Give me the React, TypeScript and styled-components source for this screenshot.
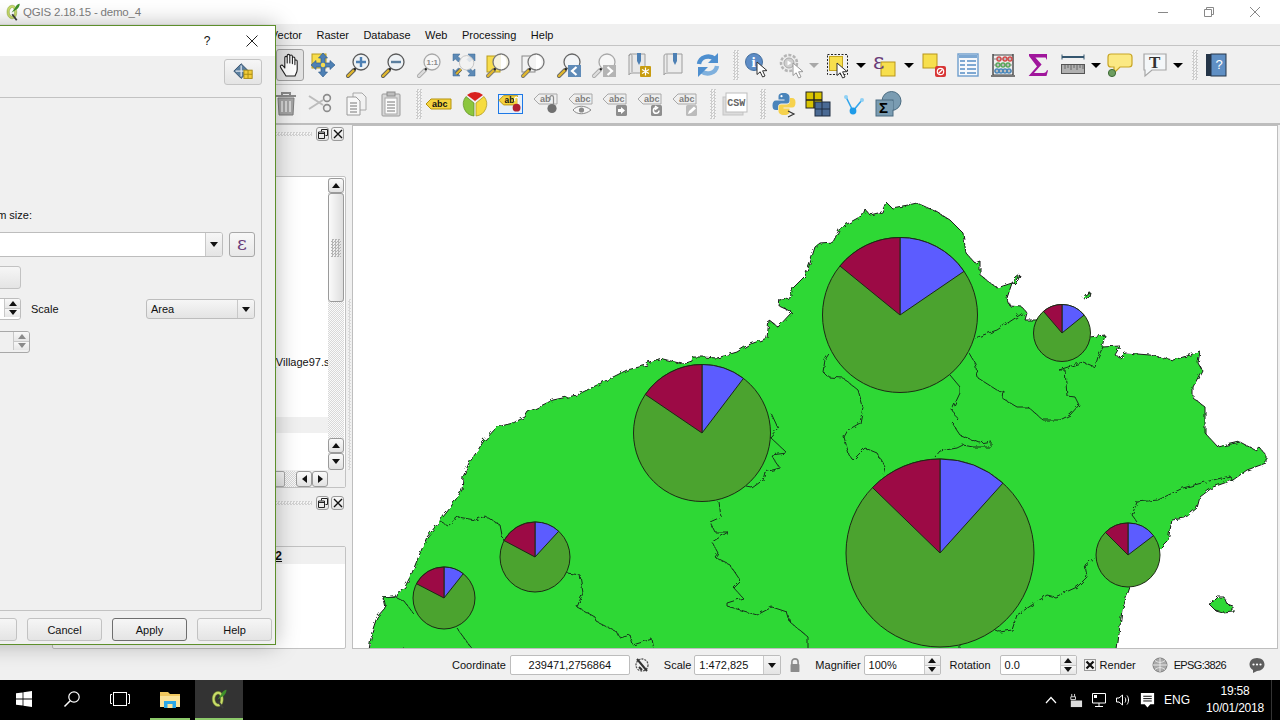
import React from "react";
import styled, { createGlobalStyle } from "styled-components";

const Global = createGlobalStyle`
  html, body { margin: 0; padding: 0; background: #f0f0f0; overflow: hidden; }
  body { font-family: "Liberation Sans", Arial, sans-serif; font-size: 11px; color: #111; }
`;

const Root = styled.div`
  position: relative;
  width: 1280px;
  height: 720px;
  overflow: hidden;
  display: flex;
  flex-direction: column;
  background: #f0f0f0;
`;

const TitleBar = styled.div`
  height: 24px;
  background: #fff;
  display: flex;
  align-items: center;
  padding: 0 2px 0 4px;
  color: #808080;
  font-size: 11.5px;
  letter-spacing: -0.2px;
`;
const TitleText = styled.span`
  margin-left: 1px;
  flex: 1;
`;
const WinBtn = styled.div`
  width: 46px;
  height: 24px;
  display: flex;
  align-items: center;
  justify-content: center;
`;
const MenuBar = styled.div`
  height: 21px;
  border-bottom: 1px solid #c4c4c4;
  display: flex;
  align-items: center;
  padding-left: 158.75px;
`;
const MenuItem = styled.span`
  padding: 0 7.25px;
  white-space: nowrap;
`;
const ToolRow = styled.div<{ $h: number; $bw: number; $bc: string }>`
  height: ${(p) => p.$h}px;
  border-bottom: ${(p) => p.$bw}px solid ${(p) => p.$bc};
  display: flex;
  align-items: center;
  flex: none;
`;
const Tool = styled.div<{ $w: number; $ml: number; $pressed?: boolean }>`
  width: ${(p) => p.$w}px;
  margin-left: ${(p) => p.$ml}px;
  height: ${(p) => (p.$pressed ? 32 : 28)}px;
  flex: none;
  display: flex;
  align-items: center;
  justify-content: center;
  position: relative;
  box-sizing: border-box;
  ${(p) => p.$pressed && "border: 1px solid #a0a0a0; border-radius: 3px; background: #e2e2e2;"}
`;
const Picked = styled.div`
  width: 25px;
  height: 20px;
  border: 1px solid #1c78e6;
  background: #e6eff9;
  display: flex;
  align-items: center;
  justify-content: center;
  box-sizing: border-box;
  overflow: visible;
`;
const Caret = styled.div<{ $dim?: boolean }>`
  width: 0;
  height: 0;
  border-left: 5px solid transparent;
  border-right: 5px solid transparent;
  border-top: 5px solid ${(p) => (p.$dim ? "#a8a8a8" : "#000")};
`;
const Grip = styled.div`
  width: 6px;
  height: 30px;
  background: repeating-conic-gradient(#cdcdcd 0 25%, #f6f6f6 0 50%) 0 0 / 3px 3px;
`;

const Work = styled.div`
  height: 525px;
  display: flex;
  flex: none;
`;
const Docks = styled.div`
  width: 347px;
  padding-top: 1px;
  box-sizing: border-box;
  display: flex;
  flex-direction: column;
  align-items: flex-end;
`;
const DockHead = styled.div<{ $mt: number }>`
  width: 72px;
  height: 15px;
  margin-top: ${(p) => p.$mt}px;
  margin-right: 1px;
  display: flex;
  align-items: center;
  gap: 2px;
`;
const DockGrip = styled.div`
  width: 38px;
  margin-right: 2px;
  height: 4px;
  background: repeating-conic-gradient(#d2d2d2 0 25%, #f4f4f4 0 50%) 0 0 / 3px 3px;
`;
const DockBtn = styled.div`
  width: 13px;
  height: 14px;
  box-sizing: border-box;
  border: 1px solid #9a9a9a;
  border-radius: 3px;
  background: linear-gradient(#f8f8f8, #e4e4e4);
  display: flex;
  align-items: center;
  justify-content: center;
`;
const Panel = styled.div<{ $mt: number; $h: number }>`
  width: 294px;
  height: ${(p) => p.$h}px;
  margin-top: ${(p) => p.$mt}px;
  margin-right: 1px;
  box-sizing: border-box;
  border: 1px solid #c2c2c2;
  border-radius: 2px;
  background: #fff;
  display: flex;
  flex-direction: column;
  flex: none;
`;
const PanelMain = styled.div`
  flex: 1;
  display: flex;
  min-height: 0;
`;
const List = styled.div`
  flex: 1;
  padding-top: 177px;
  overflow: hidden;
  white-space: nowrap;
`;
const ListRow = styled.div<{ $band?: boolean; $mt?: number }>`
  height: 16px;
  line-height: 16px;
  padding-left: 182.5px;
  margin-top: ${(p) => p.$mt ?? 0}px;
  ${(p) => p.$band && "background: #f0f0f0;"}
`;
const VScroll = styled.div`
  width: 16px;
  display: flex;
  flex-direction: column;
  margin: 1px 1px 0 0;
  background: repeating-conic-gradient(#d8d8d8 0 25%, #fafafa 0 50%) 0 0 / 2px 2px;
`;
const ScrollBtn = styled.div<{ $w?: number; $h?: number }>`
  width: ${(p) => p.$w ?? 16}px;
  height: ${(p) => p.$h ?? 15}px;
  flex: none;
  box-sizing: border-box;
  border: 1px solid #9a9a9a;
  border-radius: 3px;
  background: linear-gradient(#fafafa, #e2e2e2);
  display: flex;
  align-items: center;
  justify-content: center;
`;
const VThumb = styled.div`
  height: 109px;
  box-sizing: border-box;
  border: 1px solid #9a9a9a;
  border-radius: 3px;
  background: linear-gradient(90deg, #fafafa, #dedede);
  display: flex;
  align-items: center;
  justify-content: center;
  flex: none;
`;
const ThumbDots = styled.div`
  width: 10px;
  height: 18px;
  background: repeating-conic-gradient(#b4b4b4 0 25%, transparent 0 50%) 0 0 / 3px 3px;
`;
const VTrough = styled.div`
  flex: 1;
`;
const HScroll = styled.div`
  height: 17px;
  background: #f0f0f0;
  display: flex;
  align-items: center;
  flex: none;
`;
const HThumb = styled.div`
  width: 232px;
  height: 16px;
  box-sizing: border-box;
  border: 1px solid #a8a8a8;
  border-radius: 2px;
  background: linear-gradient(#f8f8f8, #e2e2e2);
  flex: none;
`;
const HTrough = styled.div`
  width: 11px;
  height: 16px;
  flex: none;
  background: repeating-conic-gradient(#d8d8d8 0 25%, #fafafa 0 50%) 0 0 / 2px 2px;
`;
const HeaderBand = styled.div`
  height: 17px;
  background: #f0f0f0;
  font-weight: bold;
  font-size: 12px;
  text-decoration: underline;
  line-height: 18px;
  padding-left: 191px;
  flex: none;
`;
const SplitCol = styled.div`
  width: 5px;
  display: flex;
  justify-content: center;
  padding-top: 174px;
  box-sizing: border-box;
`;
const SplitGrip = styled.div`
  width: 3px;
  height: 171px;
  background: repeating-conic-gradient(#d8d8d8 0 25%, #f4f4f4 0 50%) 0 0 / 3px 3px;
`;
const MapFrame = styled.div`
  width: 926px;
  height: 524px;
  box-sizing: border-box;
  border: 1px solid #bebebe;
  background: #fff;
  flex: none;
  overflow: hidden;
`;
const MapSvg = styled.svg`
  display: block;
  width: 924px;
  height: 522px;
`;

const StatusBar = styled.div`
  height: 30px;
  flex: none;
  display: flex;
  align-items: center;
`;
const Stat = styled.div<{ $ml: number; $tight?: boolean }>`
  margin-left: ${(p) => p.$ml}px;
  white-space: nowrap;
  display: flex;
  align-items: center;
  flex: none;
  ${(p) => p.$tight && "letter-spacing: -0.65px;"}
`;
const Field = styled.div<{ $w: number; $center?: boolean }>`
  width: ${(p) => p.$w}px;
  height: 20px;
  box-sizing: border-box;
  border: 1px solid #bdbdbd;
  border-radius: 2px;
  background: #fff;
  display: flex;
  align-items: center;
  justify-content: ${(p) => (p.$center ? "center" : "space-between")};
  padding-left: ${(p) => (p.$center ? 0 : 4)}px;
  overflow: hidden;
`;
const FieldDrop = styled.div`
  width: 16px;
  height: 18px;
  border-left: 1px solid #c8c8c8;
  background: linear-gradient(#f6f6f6, #e4e4e4);
  display: flex;
  align-items: center;
  justify-content: center;
  flex: none;
`;
const FieldSpin = styled.div`
  width: 15px;
  height: 18px;
  border-left: 1px solid #c8c8c8;
  display: flex;
  flex-direction: column;
  flex: none;
`;
const SpinCell = styled.div`
  flex: 1;
  background: linear-gradient(#f8f8f8, #e6e6e6);
  border-bottom: 1px solid #c8c8c8;
  display: flex;
  align-items: center;
  justify-content: center;
  &:last-child { border-bottom: 0; }
`;
const Tri = styled.div<{ $dir: "u" | "d" | "l" | "r"; $dim?: boolean }>`
  width: 0;
  height: 0;
  ${(p) => {
    const c = p.$dim ? "#8a8a8a" : "#111";
    if (p.$dir === "u") return `border-left:4px solid transparent;border-right:4px solid transparent;border-bottom:5px solid ${c};`;
    if (p.$dir === "d") return `border-left:4px solid transparent;border-right:4px solid transparent;border-top:5px solid ${c};`;
    if (p.$dir === "l") return `border-top:4px solid transparent;border-bottom:4px solid transparent;border-right:5px solid ${c};`;
    return `border-top:4px solid transparent;border-bottom:4px solid transparent;border-left:5px solid ${c};`;
  }}
`;
const RenderCheck = styled.div`
  width: 12px;
  height: 12px;
  box-sizing: border-box;
  border: 1px solid #999;
  background: #f4f4f4;
  display: flex;
  align-items: center;
  justify-content: center;
`;

const Taskbar = styled.div`
  height: 40px;
  flex: none;
  background: #000;
  display: flex;
  align-items: stretch;
  color: #fff;
`;
const TaskCell = styled.div<{ $w: number; $ml?: number; $active?: boolean; $open?: boolean }>`
  width: ${(p) => p.$w}px;
  margin-left: ${(p) => p.$ml ?? 0}px;
  flex: none;
  box-sizing: border-box;
  display: flex;
  align-items: center;
  justify-content: center;
  background: ${(p) => (p.$active ? "#333" : "transparent")};
  border-bottom: ${(p) => (p.$open ? "2px solid #8cc96a" : "2px solid transparent")};
`;
const TrayCell = styled.div<{ $w: number }>`
  width: ${(p) => p.$w}px;
  flex: none;
  display: flex;
  align-items: center;
  justify-content: center;
  font-size: 12px;
`;
const TraySpring = styled.div`
  flex: 1;
`;
const Clock = styled.div`
  width: 74px;
  flex: none;
  margin: 0 -3px 0 3px;
  display: flex;
  flex-direction: column;
  align-items: center;
  justify-content: center;
  font-size: 12px;
  line-height: 17px;
  letter-spacing: -0.2px;
`;
const TrayEnd = styled.div`
  width: 8px;
  flex: none;
  border-left: 1px solid #333;
  margin-left: 2px;
`;

const Dialog = styled.div`
  position: absolute;
  left: -200px;
  top: 25px;
  width: 476px;
  height: 620px;
  box-sizing: border-box;
  border: 1px solid #5d8f2b;
  background: #f0f0f0;
  box-shadow: 0 0 22px rgba(0, 0, 0, 0.28);
  display: flex;
  flex-direction: column;
`;
const DialogTitle = styled.div`
  height: 30px;
  background: #fff;
  flex: none;
  display: flex;
  align-items: center;
  justify-content: flex-end;
`;
const TitleQ = styled.div`
  width: 46px;
  font-size: 12px;
  text-align: center;
  color: #111;
  margin-right: -1px;
`;
const TitleX = styled.div`
  width: 46px;
  display: flex;
  justify-content: center;
`;
const DialogBody = styled.div`
  flex: 1;
  display: flex;
  flex-direction: column;
  padding: 3px 13px 0 0;
  min-height: 0;
`;
const DialogTop = styled.div`
  height: 26px;
  display: flex;
  justify-content: flex-end;
  flex: none;
`;
const IconBtn = styled.div`
  width: 38px;
  height: 26px;
  box-sizing: border-box;
  border: 1px solid #c4c4c4;
  border-radius: 3px;
  background: linear-gradient(#f6f6f6, #e4e4e4);
  display: flex;
  align-items: center;
  justify-content: center;
`;
const Frame = styled.div`
  height: 514px;
  margin-top: 12px;
  flex: none;
  box-sizing: border-box;
  border: 1px solid #c2c2c2;
  border-radius: 2px;
  display: flex;
  flex-direction: column;
  padding: 110px 6px 0 0;
`;
const FormRow = styled.div<{ $mt: number; $mr: number; $h: number }>`
  height: ${(p) => p.$h}px;
  margin-top: ${(p) => p.$mt}px;
  margin-right: ${(p) => p.$mr}px;
  display: flex;
  justify-content: flex-end;
  align-items: center;
  flex: none;
`;
const Combo = styled.div<{ $w: number; $h: number }>`
  width: ${(p) => p.$w}px;
  height: ${(p) => p.$h}px;
  box-sizing: border-box;
  border: 1px solid #bdbdbd;
  border-radius: 3px;
  background: #fff;
  display: flex;
  justify-content: flex-end;
  overflow: hidden;
  flex: none;
`;
const ComboDrop = styled.div`
  width: 16px;
  border-left: 1px solid #c8c8c8;
  background: linear-gradient(#f6f6f6, #e4e4e4);
  display: flex;
  align-items: center;
  justify-content: center;
`;
const Epsilon = styled.div`
  width: 26px;
  height: 25px;
  margin-left: 6px;
  box-sizing: border-box;
  border: 1px solid #a8a8a8;
  border-radius: 3px;
  background: linear-gradient(#f8f8f8, #e8e8e8);
  color: #6a3d78;
  font-family: "DejaVu Serif", serif;
  font-size: 19px;
  line-height: 20px;
  text-align: center;
`;
const PlainBtn = styled.div<{ $w: number; $h: number; $strong?: boolean }>`
  width: ${(p) => p.$w}px;
  height: ${(p) => p.$h}px;
  box-sizing: border-box;
  border: 1px solid ${(p) => (p.$strong ? "#6e6e6e" : "#c2c2c2")};
  border-radius: 3px;
  background: linear-gradient(#f6f6f6, #e4e4e4);
  display: flex;
  align-items: center;
  justify-content: center;
  flex: none;
`;
const SpinBox = styled.div<{ $w: number; $dim?: boolean }>`
  width: ${(p) => p.$w}px;
  height: 22px;
  box-sizing: border-box;
  border: 1px solid ${(p) => (p.$dim ? "#a8a8a8" : "#bdbdbd")};
  border-radius: 3px;
  background: ${(p) => (p.$dim ? "#f0f0f0" : "#fff")};
  display: flex;
  justify-content: flex-end;
  overflow: hidden;
  flex: none;
`;
const ScaleLabel = styled.div`
  width: 115px;
  padding-left: 10px;
  flex: none;
`;
const SelectBox = styled.div`
  width: 109px;
  height: 20px;
  box-sizing: border-box;
  border: 1px solid #bdbdbd;
  border-radius: 3px;
  background: linear-gradient(#f6f6f6, #e4e4e4);
  display: flex;
  align-items: center;
  justify-content: space-between;
  padding-left: 4px;
  overflow: hidden;
  flex: none;
`;
const DialogFoot = styled.div`
  height: 23px;
  margin-top: 7px;
  margin-right: -10px;
  display: flex;
  justify-content: flex-end;
  gap: 10px;
  flex: none;
`;

/* ---------- icons ---------- */
const Ico = styled.svg<{ $s?: number }>`
  width: ${(p) => p.$s ?? 28}px;
  height: ${(p) => p.$s ?? 28}px;
  display: block;
  overflow: visible;
  flex: none;
`;
const SvgLabel = styled.text<{ $size: number; $fill: string; $bold?: boolean; $family?: string }>`
  font-family: ${(p) => p.$family ?? '"Liberation Sans", sans-serif'};
  font-size: ${(p) => p.$size}px;
  font-weight: ${(p) => (p.$bold ? "bold" : "normal")};
  fill: ${(p) => p.$fill};
`;

const Mag = ({ c = "#5a5a5a", fill = "#eef2f5", h = "#dfb62c", children }: { c?: string; fill?: string; h?: string; children?: React.ReactNode }) => (
  <>
    <line x1="4" y1="25" x2="10" y2="19" stroke={c} strokeWidth="4" strokeLinecap="round" />
    <line x1="4" y1="25" x2="10" y2="19" stroke={h} strokeWidth="2.4" strokeLinecap="round" />
    <line x1="10" y1="19" x2="12" y2="17" stroke="#222" strokeWidth="2" />
    <circle cx="17" cy="11" r="8" fill={fill} stroke={c} strokeWidth="1.3" />
    {children}
  </>
);
const Cursor = ({ x, y, c = "#333" }: { x: number; y: number; c?: string }) => (
  <path transform={`translate(${x} ${y})`} d="M0 0V12.5L3.2 9.8L5.6 15L8 14L5.6 8.8L10 8.6Z" fill="#fff" stroke={c} strokeWidth="1" strokeLinejoin="round" />
);
const Tag = ({ t, x = 1, y = 8, w = 25, fill = "#f4d33f", st = "#b5930d", tc = "#111", size = 9 }: { t: string; x?: number; y?: number; w?: number; fill?: string; st?: string; tc?: string; size?: number }) => (
  <>
    <path d={`M${x} ${y + 5}L${x + 5} ${y}H${x + w}V${y + 10}H${x + 5}Z`} fill={fill} stroke={st} />
    <SvgLabel x={x + 6} y={y + 8.3} $size={size} $fill={tc} $bold>{t}</SvgLabel>
  </>
);
const GrayTag = ({ t }: { t: string }) => <Tag t={t} x={2} y={4} w={23} fill="#efefef" st="#a8a8a8" tc="#7d7d7d" size={9} />;
const Badge = ({ kind }: { kind: string }) => (
  <>
    <rect x="15" y="15" width="11" height="11" rx="1.5" fill="#8e8e8e" />
    {kind === "arrow" && <path d="M17 19H20V17L24 20.5L20 24V22H17Z" fill="#fff" />}
    {kind === "spin" && <path d="M23 20.5A2.8 2.8 0 1 1 20 17.7M19 16L21.5 17.8L19 19.6" fill="none" stroke="#fff" strokeWidth="1.5" />}
  </>
);

const ICONS: Record<string, React.ReactNode> = {
  hand: (
    <path d="M10 25L4.6 16.4C3.6 14.6 6 13.2 7.2 15L8.8 17V6.6C8.8 5 11.2 5 11.2 6.6V12V4.6C11.2 3 13.8 3 13.8 4.6V12V5.2C13.8 3.6 16.4 3.6 16.4 5.4V12.6V7.2C16.4 5.6 18.9 5.6 18.9 7.4V13.6V10C18.9 8.6 21.2 8.8 21.2 10.4V18.4C21.2 21.2 19.6 23 19 25Z" fill="#fff" stroke="#222" strokeWidth="1.1" strokeLinejoin="round" />
  ),
  panSel: (
    <>
      <rect x="3" y="3" width="14" height="14" fill="#f7dd4d" stroke="#b99c1c" />
      <path d="M14 2L18.5 7H16V12H21V9.5L26 14L21 18.5V16H16V21H18.5L14 26L9.5 21H12V16H7V18.5L2 14L7 9.5V12H12V7H9.5Z" fill="#4d80b4" stroke="#33608f" strokeWidth=".7" />
      <circle cx="14" cy="14" r="2.2" fill="#f7dd4d" />
    </>
  ),
  zoomIn: (
    <Mag>
      <path d="M17 6V16M12 11H22" stroke="#4d80b4" strokeWidth="2.4" />
    </Mag>
  ),
  zoomOut: (
    <Mag>
      <path d="M12 11H22" stroke="#5b7f9f" strokeWidth="2.4" />
    </Mag>
  ),
  zoom11: (
    <Mag c="#a8a8a8" h="#dcdcdc" fill="#f6f6f6">
      <SvgLabel x="11.5" y="14" $size={8} $fill="#8a8a8a" $bold>1:1</SvgLabel>
    </Mag>
  ),
  zoomFull: (
    <>
      <path d="M3 3H10L8 5.4L11 8.4L8.4 11L5.4 8L3 10ZM25 3V10L22.6 8L19.6 11L17 8.4L20 5.4L18 3ZM3 25V18L5.4 20L8.4 17L11 19.6L8 22.6L10 25ZM25 25H18L20 22.6L17 19.6L19.6 17L22.6 20L25 18Z" fill="#5d8ab6" stroke="#3a6690" strokeWidth=".5" />
      <g transform="translate(3 3) scale(.8)">
        <line x1="4" y1="25" x2="10" y2="19" stroke="#555" strokeWidth="4" />
        <line x1="4" y1="25" x2="10" y2="19" stroke="#dfb62c" strokeWidth="2.4" />
        <circle cx="17" cy="11" r="9" fill="#f2f2f2" fillOpacity=".85" stroke="#bdbdbd" />
      </g>
    </>
  ),
  zoomLayer: (
    <>
      <rect x="3" y="5" width="13" height="16" fill="#f7dd4d" stroke="#b99c1c" />
      <Mag fill="#f5f2e0" c="#777" />
      <path d="M17 3.4A8 8 0 0 1 17 18.6Z" fill="#fff" />
    </>
  ),
  zoomSel: (
    <>
      <rect x="3" y="5" width="13" height="16" fill="#f2f2f2" stroke="#888" />
      <Mag fill="#f3f3f3" c="#777" />
      <path d="M17 3.4A8 8 0 0 1 17 18.6Z" fill="#fff" />
    </>
  ),
  zoomLast: (
    <>
      <Mag fill="#f3f5f7" c="#666" />
      <rect x="13" y="14" width="13" height="12" fill="#5f8bb8" />
      <path d="M21.5 16L17 20L21.5 24" fill="none" stroke="#fff" strokeWidth="2.2" />
    </>
  ),
  zoomNext: (
    <>
      <Mag fill="#f7f7f7" c="#a8a8a8" h="#ddd" />
      <rect x="13" y="14" width="13" height="12" fill="#b4b4b4" />
      <path d="M17.5 16L22 20L17.5 24" fill="none" stroke="#fff" strokeWidth="2.2" />
    </>
  ),
  newBook: (
    <>
      <path d="M4 5C4 3 6 3 7 3H20V22H8C5 22 4 23 4 24Z" fill="#e8e8e8" stroke="#9c9c9c" />
      <path d="M4 5C4 2 7 3 7 5V21" fill="none" stroke="#9c9c9c" />
      <path d="M12 2H16V10L14 14L12 10Z" fill="#4d80b4" />
      <rect x="15" y="15" width="11" height="11" rx="1" fill="#c89c10" />
      <path d="M20.5 16.5V24.5M17 18.5L24 22.5M24 18.5L17 22.5" stroke="#fff" strokeWidth="1.2" />
    </>
  ),
  book: (
    <>
      <path d="M5 5C5 3 7 3 8 3H23V22H9C6 22 5 23 5 24Z" fill="#ececec" stroke="#9c9c9c" />
      <path d="M8 3V21" stroke="#a8a8a8" />
      <path d="M14 2H18V10L16 14L14 10Z" fill="#4d80b4" />
    </>
  ),
  refresh: (
    <>
      <path d="M5 13C6 6 15 3 21 8" fill="none" stroke="#4e8fcf" strokeWidth="4.4" />
      <path d="M24 2V12H14Z" fill="#4e8fcf" />
      <path d="M23 15C22 22 13 25 7 20" fill="none" stroke="#7fb0dd" strokeWidth="4.4" />
      <path d="M4 26V16H14Z" fill="#4e8fcf" />
    </>
  ),
  identify: (
    <>
      <circle cx="11" cy="11" r="8.5" fill="#5d8cc6" stroke="#46709f" />
      <SvgLabel x="8.5" y="16" $size={15} $fill="#fff" $bold $family={'"Liberation Serif", serif'}>i</SvgLabel>
      <Cursor x={14} y={11} />
    </>
  ),
  action: (
    <>
      <circle cx="11" cy="12" r="8" fill="#ededed" stroke="#b4b4b4" strokeWidth="2.5" strokeDasharray="3 1.6" />
      <circle cx="11" cy="12" r="5" fill="#cfcfcf" stroke="#aaa" />
      <path d="M9.5 9.5V14.5L13.5 12Z" fill="#fff" />
      <Cursor x={15} y={12} c="#999" />
    </>
  ),
  select: (
    <>
      <rect x="2.5" y="3.5" width="20" height="20" fill="none" stroke="#222" strokeDasharray="2 1.5" />
      <rect x="4.5" y="5.5" width="13" height="14" fill="#f7df4d" stroke="#c4a51f" />
      <Cursor x={12} y={12} />
    </>
  ),
  exprSel: (
    <>
      <rect x="10" y="11" width="14" height="14" fill="#f7df4d" stroke="#b8951a" />
      <SvgLabel x="2" y="18" $size={22} $fill="#6a3d78" $family={'"DejaVu Serif", serif'}>ε</SvgLabel>
    </>
  ),
  deselect: (
    <>
      <rect x="3" y="3" width="14" height="14" fill="#f7df4d" stroke="#b8951a" />
      <rect x="15" y="15" width="11" height="11" rx="2" fill="#d83636" />
      <circle cx="20.5" cy="20.5" r="3.2" fill="none" stroke="#fff" strokeWidth="1.2" />
      <path d="M18.5 22.5L22.5 18.5" stroke="#fff" strokeWidth="1.2" />
    </>
  ),
  table: (
    <>
      <rect x="4" y="3" width="20" height="22" fill="#f6f8fb" stroke="#6e9dcc" strokeWidth="1.4" />
      <rect x="5" y="4" width="18" height="3" fill="#7ea8d2" />
      <path d="M6 10H11M13 10H22M6 14H11M13 14H22M6 18H11M13 18H22M6 22H11M13 22H22" stroke="#7ea8d2" strokeWidth="1.8" />
    </>
  ),
  abacus: (
    <>
      <path d="M4 3V25M24 3V25" stroke="#444" strokeWidth="1.4" />
      <path d="M4 4H24M4 24H24" stroke="#444" />
      <rect x="2" y="24" width="24" height="2" fill="#777" />
      <path d="M4 8H24M4 14H24M4 20H24" stroke="#888" />
      {[10, 16, 21].map((x) => <circle key={"a" + x} cx={x} cy="8" r="2" fill="none" stroke="#d14a4a" strokeWidth="1.4" />)}
      {[9, 14, 19].map((x) => <circle key={"b" + x} cx={x} cy="14" r="2" fill="none" stroke="#5aa55a" strokeWidth="1.4" />)}
      {[8, 12, 16, 20].map((x) => <circle key={"c" + x} cx={x} cy="20" r="2" fill="none" stroke="#4a86b8" strokeWidth="1.4" />)}
    </>
  ),
  sigma: <path d="M5 3H23V9L21.6 6.4H11.4L17.6 13.4L10 22H19.5C21.4 22 22.4 21 23 19L24 19.4L22.5 25H4.6L13 15.4L5 5Z" fill="#a0169c" />,
  measure: (
    <>
      <path d="M3 6H25" stroke="#35566f" strokeWidth="2" />
      <path d="M3 3.5V8.5M25 3.5V8.5" stroke="#35566f" />
      <rect x="2.5" y="13.5" width="23" height="9" fill="#b0b0b0" stroke="#555" />
      <path d="M6 14V18M9 14V17M12 14V19M15 14V17M18 14V19M21 14V17M24 14V18" stroke="#555" strokeWidth=".8" />
    </>
  ),
  tip: (
    <>
      <path d="M5 3H23C25 3 26 4 26 6V13C26 15 25 16 23 16H14L8 22V16H5C3 16 2 15 2 13V6C2 4 3 3 5 3Z" fill="#fbe983" stroke="#c8a526" strokeWidth="1.2" />
      <circle cx="6" cy="22" r="3.6" fill="#6d9d5f" stroke="#3f6a38" />
    </>
  ),
  text: (
    <>
      <path d="M3 3H25V19H11L4 25V19H3Z" fill="#f4f7f9" stroke="#a6a6a6" strokeWidth="1.2" />
      <SvgLabel x="8" y="17" $size={17} $fill="#333" $bold $family={'"Liberation Serif", serif'}>T</SvgLabel>
    </>
  ),
  help: (
    <>
      <rect x="4" y="3" width="5" height="22" fill="#243548" />
      <rect x="9" y="3" width="15" height="22" fill="#5f8fc4" stroke="#243548" />
      <SvgLabel x="13.5" y="18" $size={13} $fill="#fff">?</SvgLabel>
    </>
  ),
  trash: (
    <>
      <path d="M10 5V3H18V5M4 6H24" stroke="#8a8a8a" strokeWidth="2" fill="none" />
      <path d="M6 8H22L21 25H7Z" fill="#a4a4a4" stroke="#7c7c7c" />
      <path d="M10 11V22M14 11V22M18 11V22" stroke="#e8e8e8" strokeWidth="1.4" />
    </>
  ),
  scissors: (
    <>
      <path d="M3 6L17 15M3 19L17 10" stroke="#bcbcbc" strokeWidth="2" />
      <circle cx="21" cy="8" r="3.4" fill="none" stroke="#8c8c8c" strokeWidth="1.6" />
      <circle cx="21" cy="18" r="3.4" fill="none" stroke="#8c8c8c" strokeWidth="1.6" />
    </>
  ),
  copy: (
    <>
      <path d="M11 3H20L24 7V20H11Z" fill="#f2f2f2" stroke="#a8a8a8" />
      <path d="M5 7H14L18 11V25H5Z" fill="#f8f8f8" stroke="#9a9a9a" />
      <path d="M8 13H15M8 16H15M8 19H15M8 22H15" stroke="#777" />
    </>
  ),
  paste: (
    <>
      <rect x="5" y="4" width="18" height="22" rx="1" fill="#d8d8d8" stroke="#9a9a9a" />
      <rect x="8" y="8" width="12" height="16" fill="#fbfbfb" stroke="#a8a8a8" />
      <rect x="10" y="2" width="8" height="4" fill="#bdbdbd" stroke="#8c8c8c" />
      <path d="M10 12H18M10 15H18M10 18H18M10 21H18" stroke="#777" />
    </>
  ),
  abc: <Tag t="abc" x={1} y={9} w={25} />,
  pieDiag: (
    <>
      <path d="M6 5A12 12 0 0 1 22 5L14 11Z" fill="#d8201e" />
      <path d="M23 6.5A12 12 0 0 1 15 26V13Z" fill="#f6dc3f" stroke="#a8921c" strokeWidth=".7" />
      <path d="M5 6.5A12 12 0 0 0 13 26V13Z" fill="#8cc63e" stroke="#5c8c20" strokeWidth=".7" />
    </>
  ),
  abLock: (
    <>
      <Tag t="ab" x={1} y={5} w={20} />
      <path d="M18 11V8.5C18 6 21.5 6 21.5 8.5V14" fill="none" stroke="#fff" strokeWidth="1.2" />
      <circle cx="20" cy="18" r="4.2" fill="#b02030" />
    </>
  ),
  abGray: (
    <>
      <GrayTag t="ab" />
      <path d="M18 10V7.5C18 5 21.5 5 21.5 7.5V14" fill="none" stroke="#8a8a8a" strokeWidth="1.2" />
      <circle cx="20" cy="18.5" r="4.6" fill="#707070" />
    </>
  ),
  abcEye: (
    <>
      <GrayTag t="abc" />
      <path d="M6 20C10 15 18 15 24 20C18 25 10 25 6 20Z" fill="#f6f6f6" stroke="#8a8a8a" />
      <circle cx="14.5" cy="20" r="2.6" fill="#8a8a8a" />
    </>
  ),
  abcMove: (
    <>
      <GrayTag t="abc" />
      <Badge kind="arrow" />
    </>
  ),
  abcSpin: (
    <>
      <GrayTag t="abc" />
      <Badge kind="spin" />
    </>
  ),
  abcPen: (
    <>
      <GrayTag t="abc" />
      <rect x="15" y="15" width="11" height="11" rx="1.5" fill="#bcbcbc" />
      <path d="M17 24L18 21L23 16.5L25 18.5L20 23Z" fill="#fff" />
    </>
  ),
  csw: (
    <>
      <rect x="2" y="7" width="20" height="18" fill="#dcdcdc" stroke="#c4c4c4" />
      <rect x="5" y="3" width="21" height="19" fill="#fff" stroke="#bdbdbd" />
      <SvgLabel x="6.3" y="16" $size={10} $fill="#666" $bold $family={'"Liberation Mono", monospace'}>CSW</SvgLabel>
    </>
  ),
  python: (
    <>
      <path d="M14 3C9 3 8.5 5 8.5 7V9.5H14.5V10.5H6C3.5 10.5 2.5 12.5 2.5 15.5C2.5 18.5 3.5 20 6 20H8V17C8 15 9.5 13.5 11.5 13.5H17C18.5 13.5 19.5 12.5 19.5 11V7C19.5 5 17.5 3 14 3Z" fill="#4a84ba" />
      <circle cx="11.5" cy="6.2" r="1.1" fill="#fff" />
      <path d="M14 25C19 25 19.5 23 19.5 21V18.5H13.5V17.5H22C24.5 17.5 25.5 15.5 25.5 12.5C25.5 9.5 24.5 8 22 8H20V11C20 13 18.5 14.5 16.5 14.5H11C9.5 14.5 8.5 15.5 8.5 17V21C8.5 23 10.5 25 14 25Z" fill="#f6d24e" />
      <path d="M18 21L24 24L18 27" fill="none" stroke="#333" strokeWidth="1.2" />
    </>
  ),
  grass: (
    <>
      <rect x="2" y="2" width="16" height="16" fill="#d9c400" stroke="#222" />
      <path d="M10 2V18M2 10H18" stroke="#222" strokeWidth="1.4" />
      <rect x="11" y="12" width="15" height="14" fill="#4a6a94" stroke="#1f2d40" />
      <path d="M18 12V26M11 19H26" stroke="#1f2d40" />
    </>
  ),
  hub: (
    <>
      <path d="M14 21L7 7M14 21L23 10" stroke="#33a6ec" strokeWidth="1.6" />
      <circle cx="14" cy="21" r="3.4" fill="#1e9be8" />
      <circle cx="7" cy="7" r="2" fill="#8fd0f4" />
      <circle cx="23" cy="10" r="2" fill="#8fd0f4" />
    </>
  ),
  sigmaCloud: (
    <>
      <circle cx="17.5" cy="11" r="9.5" fill="#7a9cb2" stroke="#4a6b80" />
      <rect x="2" y="10" width="17" height="16" fill="#7a9cb2" stroke="#4a6b80" />
      <path d="M12 11.5A9.5 9.5 0 0 0 19 20V11Z" fill="#7a9cb2" />
      <SvgLabel x="5" y="23" $size={15} $fill="#000" $bold>Σ</SvgLabel>
    </>
  ),
};

type Item = { at: number; i?: string; k?: "caret" | "dimcaret" | "grip" | "pressed" | "picked" };
const ROW1: Item[] = [
  { at: 290, i: "hand", k: "pressed" }, { at: 322.5, i: "panSel" }, { at: 358, i: "zoomIn" }, { at: 393, i: "zoomOut" },
  { at: 428.5, i: "zoom11" }, { at: 464, i: "zoomFull" }, { at: 498, i: "zoomLayer" }, { at: 533, i: "zoomSel" },
  { at: 568.5, i: "zoomLast" }, { at: 603.5, i: "zoomNext" }, { at: 639, i: "newBook" }, { at: 673, i: "book" },
  { at: 708, i: "refresh" }, { at: 736, k: "grip" }, { at: 757, i: "identify" }, { at: 792, i: "action" },
  { at: 814, k: "dimcaret" }, { at: 839, i: "select" }, { at: 861, k: "caret" }, { at: 885, i: "exprSel" },
  { at: 909, k: "caret" }, { at: 934, i: "deselect" }, { at: 968, i: "table" }, { at: 1003, i: "abacus" },
  { at: 1038, i: "sigma" }, { at: 1073, i: "measure" }, { at: 1096, k: "caret" }, { at: 1120, i: "tip" },
  { at: 1155, i: "text" }, { at: 1178, k: "caret" }, { at: 1195, k: "grip" }, { at: 1216, i: "help" },
];
const ROW2: Item[] = [
  { at: 286, i: "trash" }, { at: 320, i: "scissors" }, { at: 356, i: "copy" }, { at: 391, i: "paste" },
  { at: 419, k: "grip" }, { at: 439, i: "abc" }, { at: 475, i: "pieDiag" }, { at: 510.5, i: "abLock", k: "picked" },
  { at: 546, i: "abGray" }, { at: 581, i: "abcEye" }, { at: 615, i: "abcMove" }, { at: 650, i: "abcSpin" },
  { at: 685, i: "abcPen" }, { at: 713, k: "grip" }, { at: 735, i: "csw" }, { at: 762.5, k: "grip" },
  { at: 784, i: "python" }, { at: 818, i: "grass" }, { at: 853, i: "hub" }, { at: 888, i: "sigmaCloud" },
];

function Tools({ items }: { items: Item[] }) {
  let cursor = 0;
  return (
    <>
      {items.map((it, idx) => {
        const w = it.k === "caret" || it.k === "dimcaret" ? 10 : it.k === "grip" ? 6 : 28;
        const ml = it.at - w / 2 - cursor;
        cursor = it.at + w / 2;
        return (
          <Tool key={idx} $w={w} $ml={ml} $pressed={it.k === "pressed"}>
            {it.k === "caret" && <Caret />}
            {it.k === "dimcaret" && <Caret $dim />}
            {it.k === "grip" && <Grip />}
            {it.k === "picked" && (
              <Picked>
                <Ico viewBox="0 0 28 28" $s={26}>{ICONS[it.i!]}</Ico>
              </Picked>
            )}
            {it.i && it.k !== "picked" && <Ico viewBox="0 0 28 28">{ICONS[it.i]}</Ico>}
          </Tool>
        );
      })}
    </>
  );
}

/* ---------- map ---------- */
const COAST =
  "M369 650L372 632L377 617L385 608L383 598L395 597L397 593L405 587L412 573L418 558L427 537L439 522L450 508L462 490L463 477L469 463L478 450L483 442L497 427L513 423L525 417L528 412L553 400L577 395L593 387L607 380L627 370L647 365L648 360L650 363L663 359L683 364L692 361L693 357L703 357L717 358L737 352L748 345L767 338L769 320L778 327L792 312L779 306L780 299L790 298L793 288L805 276L810 263L815 247L820 243L833 242L840 228L863 215L865 209L870 215L882 212L886 202L892 208L908 205L917 203L937 212L950 220L963 233L966 253L975 263L980 261L980 275L997 288L1012 283L1007 298L1010 306L1022 307L1027 313L1025 320L1037 320L1060 312L1090 337L1105 335L1102 347L1120 346L1115 355L1120 358L1125 353L1150 355L1173 360L1190 355L1200 351L1198 363L1202 370L1193 387L1193 398L1205 407L1205 433L1218 447L1240 442L1255 450L1259 447L1266 455L1266 463L1247 470L1233 480L1213 487L1200 497L1197 508L1185 518L1172 520L1168 540L1160 548L1130 587L1122 610L1117 650Z";
const BORDERS = [
  "M830 352L825 360L823 372L828 377L843 378L858 390L863 407L860 423L848 430L844 437L849 455L853 460L865 448L877 453L885 467L883 475",
  "M950 375L960 387L960 393L952 410L957 418L952 423L960 435L980 443L991 441L991 447L973 447L963 445L957 448L940 451L935 457",
  "M969 353L975 363L978 378L1000 392L1003 390L1002 398L1017 407L1028 407L1043 420L1060 420L1070 415L1079 405L1075 397L1067 396L1065 370L1059 370L1083 362L1095 367L1098 357L1103 347",
  "M975 338L997 330L1023 313",
  "M995 630L1000 632L1012 630L1017 615L1047 595L1055 597L1077 587L1087 577L1085 565L1095 557",
  "M1138 523L1132 515L1137 502L1158 500L1183 488L1213 480L1230 476L1233 482",
  "M771 413L778 428L770 437L787 453L771 455L780 468L765 472L763 480L752 488L747 487",
  "M719 502L721 517L710 522L715 532L728 532L712 542L718 553L715 557L720 560L730 565L740 580L733 587L743 598L727 603L727 606L757 615L772 607L787 612L790 622L808 637L808 650",
  "M567 573L580 575L583 593L577 607L595 617L597 622L617 632L620 638L630 635L633 645L652 639L654 650",
  "M441 522L448 526L458 517L475 520L485 516L500 525L503 540",
  "M383 598L395 597L405 602L413 613",
  "M456 627L473 650",
  "M960 640L960 650",
];
const ISLES = [
  "M1083 298L1086 294L1091 293L1090 297L1085 299Z",
  "M1208 603L1214 601L1218 597L1224 597L1227 604L1233 606L1233 611L1222 612L1215 610Z",
  "M1012 283L1016 278L1020 275L1018 280L1014 284Z",
];
const PIES = [
  { x: 702, y: 433, r: 68.5, b: 37.2, c: -55.8 },
  { x: 900, y: 315, r: 77.5, b: 55.7, c: -50.8 },
  { x: 1062, y: 333, r: 28.5, b: 51, c: -40.6 },
  { x: 940, y: 553, r: 94, b: 42, c: -45.9 },
  { x: 1128, y: 555, r: 32, b: 52.8, c: -45 },
  { x: 535, y: 557, r: 35, b: 42.6, c: -62 },
  { x: 444, y: 598, r: 31, b: 38.4, c: -62.6 },
];
const polar = (p: { x: number; y: number; r: number }, deg: number) => {
  const a = (deg * Math.PI) / 180;
  return `${(p.x + p.r * Math.sin(a)).toFixed(2)} ${(p.y - p.r * Math.cos(a)).toFixed(2)}`;
};

function MapView() {
  return (
    <MapSvg viewBox="353 126 924 522">
      <defs>
        <filter id="rough" x="-2%" y="-2%" width="104%" height="104%">
          <feTurbulence type="fractalNoise" baseFrequency="0.2" numOctaves="3" seed="4" />
          <feDisplacementMap in="SourceGraphic" scale="4.5" />
        </filter>
      </defs>
      <g filter="url(#rough)">
        <path d={COAST} fill="#2fd836" stroke="#1c1c1c" strokeWidth="1" />
        {ISLES.map((d) => <path key={d} d={d} fill="#2fd836" stroke="#1c1c1c" strokeWidth="1" />)}
        {BORDERS.map((d) => <path key={d} d={d} fill="none" stroke="#14321a" strokeWidth="1" />)}
      </g>
      {PIES.map((p) => (
        <g key={p.x} stroke="#1c2a14" strokeWidth="1">
          <circle cx={p.x} cy={p.y} r={p.r} fill="#4ba32f" />
          <path d={`M${p.x} ${p.y}L${polar(p, 0)}A${p.r} ${p.r} 0 0 1 ${polar(p, p.b)}Z`} fill="#5c5cff" />
          <path d={`M${p.x} ${p.y}L${polar(p, p.c)}A${p.r} ${p.r} 0 0 1 ${polar(p, 0)}Z`} fill="#9c0a45" />
        </g>
      ))}
    </MapSvg>
  );
}

const RestoreGlyph = () => (
  <Ico viewBox="0 0 10 10" $s={10}>
    <path d="M3.5 2.5V.5H9.5V6.5H7.5M.5 3H6.5V9.5H.5Z M.5 4.5H6.5" fill="none" stroke="#222" strokeWidth="1" />
  </Ico>
);
const CloseGlyph = () => (
  <Ico viewBox="0 0 10 10" $s={10}>
    <path d="M1 1L9 9M9 1L1 9" stroke="#111" strokeWidth="1.4" />
  </Ico>
);
const DockControls = () => (
  <>
    <DockGrip />
    <DockBtn><RestoreGlyph /></DockBtn>
    <DockBtn><CloseGlyph /></DockBtn>
  </>
);

const QLogo = ({ s }: { s: number }) => (
  <Ico viewBox="0 0 20 24" $s={s}>
    <path d="M9 3C4 3 2 8 2 12C2 17 5 21 9 21C13 21 15 17 15 12C15 7 13 3 9 3ZM9 6C11.5 6 12 10 12 12C12 15 11 18 9 18C7 18 5 15 5 12C5 9 7 6 9 6Z" fill="#c9dc6a" stroke="#7e9a2e" strokeWidth=".6" />
    <path d="M9 15L15 23" stroke="#3c3c3c" strokeWidth="2.4" />
    <path d="M8 13L13 6C14 3 17 1 19 1C19 4 17 8 14 9Z" fill="#3f8f2a" />
  </Ico>
);
const WinGlyph = ({ kind }: { kind: string }) => (
  <Ico viewBox="0 0 12 12" $s={12}>
    {kind === "min" && <path d="M1 6.5H11" stroke="#888" />}
    {kind === "max" && <path d="M1.5 3.5H8.5V10.5H1.5ZM3.5 3.5V1.5H10.5V8.5H8.5" fill="none" stroke="#888" />}
    {kind === "close" && <path d="M1 1L11 11M11 1L1 11" stroke="#888" />}
  </Ico>
);

export default function App() {
  return (
    <Root>
      <Global />
      <TitleBar>
        <QLogo s={18} />
        <TitleText>QGIS 2.18.15 - demo_4</TitleText>
        <WinBtn><WinGlyph kind="min" /></WinBtn>
        <WinBtn><WinGlyph kind="max" /></WinBtn>
        <WinBtn><WinGlyph kind="close" /></WinBtn>
      </TitleBar>
      <MenuBar>
        {["Settings", "Plugins", "Vector", "Raster", "Database", "Web", "Processing", "Help"].map((m) => (
          <MenuItem key={m}>{m}</MenuItem>
        ))}
      </MenuBar>
      <ToolRow $h={38} $bw={1} $bc="#c4c4c4"><Tools items={ROW1} /></ToolRow>
      <ToolRow $h={38} $bw={2} $bc="#bdbdbd"><Tools items={ROW2} /></ToolRow>
      <Work>
        <Docks>
          <DockHead $mt={0}><DockControls /></DockHead>
          <Panel $mt={35} $h={312}>
            <PanelMain>
              <List>
                <ListRow>Taiwan_Village97.sld</ListRow>
                <ListRow $mt={47} $band />
              </List>
              <VScroll>
                <ScrollBtn><Tri $dir="u" /></ScrollBtn>
                <VThumb><ThumbDots /></VThumb>
                <VTrough />
                <ScrollBtn><Tri $dir="u" /></ScrollBtn>
                <ScrollBtn $h={17}><Tri $dir="d" /></ScrollBtn>
              </VScroll>
            </PanelMain>
            <HScroll>
              <HThumb />
              <HTrough />
              <ScrollBtn $h={16}><Tri $dir="l" /></ScrollBtn>
              <ScrollBtn $h={16}><Tri $dir="r" /></ScrollBtn>
            </HScroll>
          </Panel>
          <DockHead $mt={7}><DockControls /></DockHead>
          <Panel $mt={36} $h={103}>
            <HeaderBand>Field 2</HeaderBand>
          </Panel>
        </Docks>
        <SplitCol><SplitGrip /></SplitCol>
        <MapFrame><MapView /></MapFrame>
      </Work>
      <StatusBar>
        <Stat $ml={452}>Coordinate</Stat>
        <Stat $ml={4}><Field $w={120} $center>239471,2756864</Field></Stat>
        <Stat $ml={4}>
          <Ico viewBox="0 0 16 16" $s={16}>
            <circle cx="8" cy="8" r="6" fill="none" stroke="#555" strokeWidth="1.3" strokeDasharray="2 1" />
            <path d="M3 2L13 14M5 10L8 13" stroke="#333" strokeWidth="2" />
          </Ico>
        </Stat>
        <Stat $ml={14}>Scale</Stat>
        <Stat $ml={3}>
          <Field $w={87}>1:472,825<FieldDrop><Tri $dir="d" /></FieldDrop></Field>
        </Stat>
        <Stat $ml={6}>
          <Ico viewBox="0 0 14 18" $s={16}>
            <path d="M3.5 9V5.5C3.5 1 10.5 1 10.5 5.5V9" fill="none" stroke="#8c8c8c" strokeWidth="1.8" />
            <rect x="2" y="8" width="10" height="9" rx="1" fill="#8c8c8c" />
          </Ico>
        </Stat>
        <Stat $ml={12}>Magnifier</Stat>
        <Stat $ml={3}>
          <Field $w={77}>100%
            <FieldSpin>
              <SpinCell><Tri $dir="u" /></SpinCell>
              <SpinCell><Tri $dir="d" /></SpinCell>
            </FieldSpin>
          </Field>
        </Stat>
        <Stat $ml={9}>Rotation</Stat>
        <Stat $ml={9}>
          <Field $w={77}>0.0
            <FieldSpin>
              <SpinCell><Tri $dir="u" /></SpinCell>
              <SpinCell><Tri $dir="d" /></SpinCell>
            </FieldSpin>
          </Field>
        </Stat>
        <Stat $ml={7}>
          <RenderCheck>
            <Ico viewBox="0 0 10 10" $s={10}><path d="M1.5 1.5L8.5 8.5M8.5 1.5L1.5 8.5" stroke="#111" strokeWidth="2.2" /></Ico>
          </RenderCheck>
        </Stat>
        <Stat $ml={4}>Render</Stat>
        <Stat $ml={16}>
          <Ico viewBox="0 0 16 16" $s={16}>
            <circle cx="8" cy="8" r="7" fill="#a8a8a8" stroke="#7c7c7c" />
            <path d="M1 8H15M8 1V15M3 3.5C6 6 10 6 13 3.5M3 12.5C6 10 10 10 13 12.5" fill="none" stroke="#e8e8e8" />
          </Ico>
        </Stat>
        <Stat $ml={6} $tight>EPSG:3826</Stat>
        <Stat $ml={22}>
          <Ico viewBox="0 0 18 18" $s={18}>
            <path d="M9 2C13.5 2 16.5 4.8 16.5 8.5C16.5 12 13.5 15 9 15L5 17V14C3 13 1.5 11 1.5 8.5C1.5 4.8 4.5 2 9 2Z" fill="#5e5e5e" />
            <circle cx="5.5" cy="8.5" r="1.1" fill="#fff" /><circle cx="9" cy="8.5" r="1.1" fill="#fff" /><circle cx="12.5" cy="8.5" r="1.1" fill="#fff" />
          </Ico>
        </Stat>
      </StatusBar>
      <Taskbar>
        <TaskCell $w={48}>
          <Ico viewBox="0 0 16 16" $s={16}>
            <path d="M0 2.3L6.6 1.4V7.6H0ZM7.4 1.3L16 0V7.6H7.4ZM0 8.4H6.6V14.6L0 13.7ZM7.4 8.4H16V16L7.4 14.7Z" fill="#fff" />
          </Ico>
        </TaskCell>
        <TaskCell $w={48}>
          <Ico viewBox="0 0 18 18" $s={18}>
            <circle cx="11" cy="7" r="5.2" fill="none" stroke="#fff" strokeWidth="1.2" />
            <path d="M7.2 10.8L1.5 16.5" stroke="#fff" strokeWidth="1.5" />
          </Ico>
        </TaskCell>
        <TaskCell $w={48}>
          <Ico viewBox="0 0 20 14" $s={20}>
            <rect x="3.5" y="0.5" width="13" height="13" fill="none" stroke="#fff" />
            <path d="M2 2.5H.5V11.5H2M18 2.5H19.5V11.5H18" fill="none" stroke="#fff" />
          </Ico>
        </TaskCell>
        <TaskCell $w={40} $ml={6} $open>
          <Ico viewBox="0 0 22 20" $s={22}>
            <path d="M1 3H9L11 5H21V18H1Z" fill="#f0c75e" />
            <path d="M1 7H21V18H1Z" fill="#fbe39a" />
            <rect x="5" y="12" width="12" height="7" fill="#2aa7e8" />
            <rect x="8.5" y="15" width="5" height="4" fill="#fbe39a" />
          </Ico>
        </TaskCell>
        <TaskCell $w={48} $ml={5} $active $open><QLogo s={20} /></TaskCell>
        <TraySpring />
        <TrayCell $w={24}>
          <Ico viewBox="0 0 12 8" $s={12}><path d="M1 7L6 1.5L11 7" fill="none" stroke="#fff" strokeWidth="1.2" /></Ico>
        </TrayCell>
        <TrayCell $w={24}>
          <Ico viewBox="0 0 16 16" $s={15}>
            <path d="M4 1V4M7 1V4M3 4H8V7H3Z" fill="none" stroke="#ddd" />
            <rect x="3" y="8" width="12" height="7" fill="#ddd" />
          </Ico>
        </TrayCell>
        <TrayCell $w={24}>
          <Ico viewBox="0 0 16 16" $s={16}>
            <path d="M1.5 1.5H14.5V11H1.5ZM8 11V14.5M4 14.5H12" fill="none" stroke="#fff" />
            <rect x="3" y="3" width="3" height="3" fill="#fff" />
          </Ico>
        </TrayCell>
        <TrayCell $w={24}>
          <Ico viewBox="0 0 16 16" $s={16}>
            <path d="M1.5 6H4L7.5 3V13L4 10H1.5Z" fill="none" stroke="#fff" />
            <path d="M10 5.5C11 7 11 9 10 10.5M12 3.5C14 6 14 10 12 12.5" fill="none" stroke="#fff" />
          </Ico>
        </TrayCell>
        <TrayCell $w={24}>
          <Ico viewBox="0 0 16 18" $s={17}>
            <path d="M1 1H15V13H11L8 16.5L5 13H1Z" fill="#fff" />
            <path d="M3.5 4.5H12.5M3.5 7H12.5M3.5 9.5H12.5" stroke="#000" />
          </Ico>
        </TrayCell>
        <TrayCell $w={36}>ENG</TrayCell>
        <Clock><span>19:58</span><span>10/01/2018</span></Clock>
        <TrayEnd />
      </Taskbar>
      <Dialog>
        <DialogTitle>
          <TitleQ>?</TitleQ>
          <TitleX>
            <Ico viewBox="0 0 12 12" $s={12}><path d="M.5 .5L11.5 11.5M11.5 .5L.5 11.5" stroke="#222" /></Ico>
          </TitleX>
        </DialogTitle>
        <DialogBody>
          <DialogTop>
            <IconBtn>
              <Ico viewBox="0 0 24 20" $s={22}>
                <path d="M10 1L18 9L10 17L2 9Z" fill="#5b7f9f" stroke="#2f4c68" />
                <path d="M10 3V15M4 9H16" stroke="#dfe6ee" strokeWidth="1.4" />
                <rect x="13" y="8" width="9" height="9" fill="#f2cc3a" stroke="#a88a12" />
                <path d="M17.5 8V17M13 12.5H22" stroke="#a88a12" />
              </Ico>
            </IconBtn>
          </DialogTop>
          <Frame>
            <FormRow $mt={0} $mr={223} $h={14}>Diagram size:</FormRow>
            <FormRow $mt={10} $mr={0} $h={25}>
              <Combo $w={400} $h={25}><ComboDrop><Tri $dir="d" /></ComboDrop></Combo>
              <Epsilon>ε</Epsilon>
            </FormRow>
            <FormRow $mt={9} $mr={234} $h={23}><PlainBtn $w={160} $h={23}>Find</PlainBtn></FormRow>
            <FormRow $mt={9} $mr={0} $h={22}>
              <SpinBox $w={80}>
                <FieldSpin>
                  <SpinCell><Tri $dir="u" /></SpinCell>
                  <SpinCell><Tri $dir="d" /></SpinCell>
                </FieldSpin>
              </SpinBox>
              <ScaleLabel>Scale</ScaleLabel>
              <SelectBox>Area<FieldDrop><Tri $dir="d" /></FieldDrop></SelectBox>
            </FormRow>
            <FormRow $mt={11} $mr={225} $h={22}>
              <SpinBox $w={80} $dim>
                <FieldSpin>
                  <SpinCell><Tri $dir="u" $dim /></SpinCell>
                  <SpinCell><Tri $dir="d" $dim /></SpinCell>
                </FieldSpin>
              </SpinBox>
            </FormRow>
          </Frame>
          <DialogFoot>
            <PlainBtn $w={75} $h={23}>OK</PlainBtn>
            <PlainBtn $w={75} $h={23}>Cancel</PlainBtn>
            <PlainBtn $w={75} $h={23} $strong>Apply</PlainBtn>
            <PlainBtn $w={75} $h={23}>Help</PlainBtn>
          </DialogFoot>
        </DialogBody>
      </Dialog>
    </Root>
  );
}
